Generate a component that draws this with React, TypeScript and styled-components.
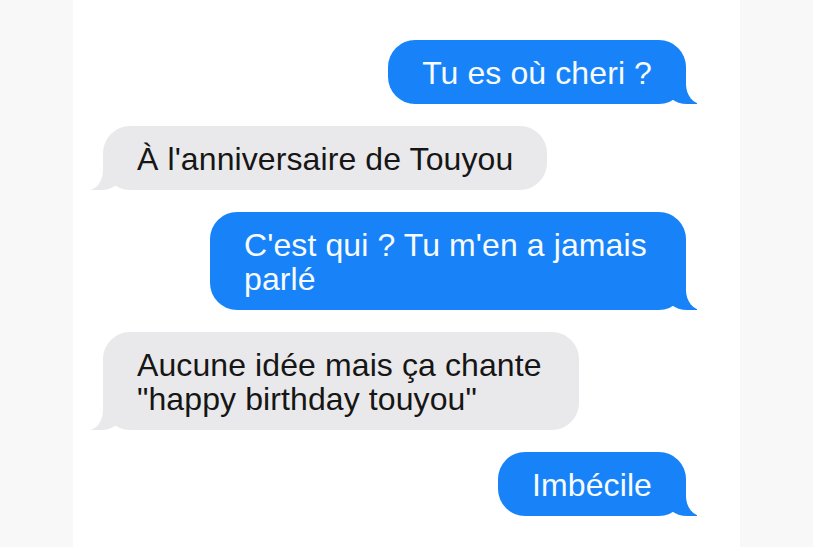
import React from "react";
import styled, { createGlobalStyle, css } from "styled-components";

const GlobalStyle = createGlobalStyle`
  html, body {
    margin: 0;
    padding: 0;
    background: #f8f8f8;
  }
  body {
    font-family: "Liberation Sans", Arial, Helvetica, sans-serif;
  }
`;

const Page = styled.div`
  display: flex;
  justify-content: center;
  width: 813px;
  height: 547px;
  background: #f8f8f8;
  overflow: hidden;
`;

const Column = styled.div`
  width: 667px;
  height: 547px;
  background: #ffffff;
  box-sizing: border-box;
  padding: 40px 54px 0 30px;
  display: flex;
  flex-direction: column;
  gap: 22px;
`;

type Side = "me" | "them";

const Bubble = styled.div<{ $side: Side }>`
  position: relative;
  box-sizing: border-box;
  max-width: 476px;
  padding: 16px 34px 14px;
  border-radius: 27px;
  font-size: 32px;
  line-height: 34px;
  letter-spacing: 0.1px;

  &::before,
  &::after {
    content: "";
    position: absolute;
    bottom: 0;
    height: 32px;
  }

  ${({ $side }) =>
    $side === "me"
      ? css`
          align-self: flex-end;
          background: #1883f8;
          color: #f7fbff;
          &::before {
            right: -11px;
            width: 32px;
            background: #1883f8;
            border-bottom-left-radius: 22px 18px;
          }
          &::after {
            right: -36px;
            width: 36px;
            background: #ffffff;
            border-bottom-left-radius: 16px 20px;
          }
        `
      : css`
          align-self: flex-start;
          background: #e9e9eb;
          color: #161616;
          &::before {
            left: -12px;
            width: 32px;
            background: #e9e9eb;
            border-bottom-right-radius: 22px 18px;
          }
          &::after {
            left: -29px;
            width: 29px;
            background: #ffffff;
            border-bottom-right-radius: 15px 20px;
          }
        `}
`;

const messages: { side: Side; text: string }[] = [
  { side: "me", text: "Tu es où cheri ?" },
  { side: "them", text: "À l'anniversaire de Touyou" },
  { side: "me", text: "C'est qui ? Tu m'en a jamais parlé" },
  { side: "them", text: "Aucune idée mais ça chante \"happy birthday touyou\"" },
  { side: "me", text: "Imbécile" },
];

export default function App() {
  return (
    <>
      <GlobalStyle />
      <Page>
        <Column>
          {messages.map((m, i) => (
            <Bubble key={i} $side={m.side}>
              {m.text}
            </Bubble>
          ))}
        </Column>
      </Page>
    </>
  );
}
